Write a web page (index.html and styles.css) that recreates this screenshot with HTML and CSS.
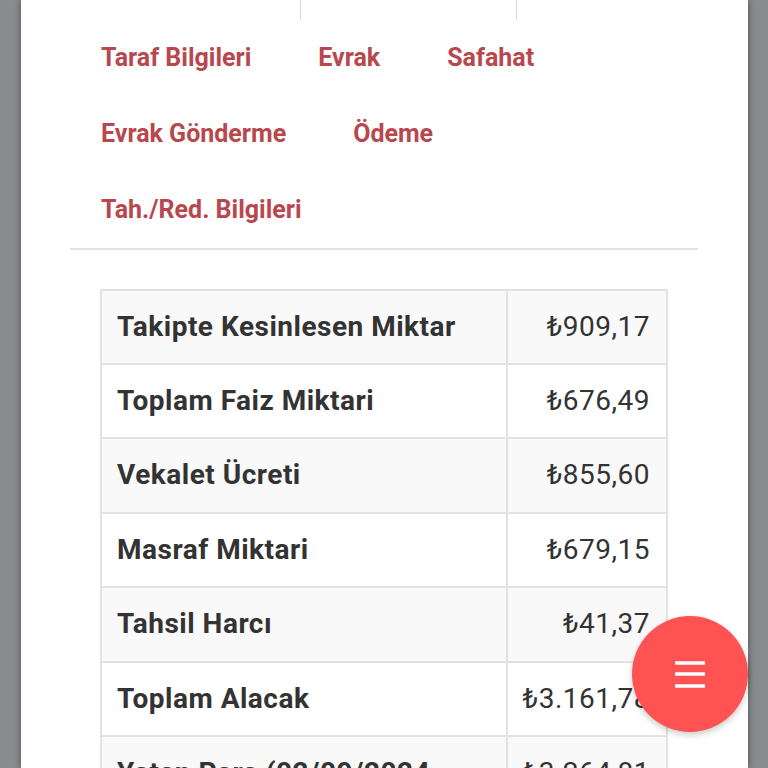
FILE: index.html
```html
<!DOCTYPE html>
<html lang="tr">
<head>
<meta charset="utf-8">
<link rel="stylesheet" href="styles.css">
</head>
<body>
<div class="page">
  <div class="card">
    <div class="topstrip">
      <span class="seg seg1"></span>
      <span class="seg seg2"></span>
    </div>
    <ul class="tabs">
      <li><a>Taraf Bilgileri</a></li>
      <li><a>Evrak</a></li>
      <li><a>Safahat</a></li>
      <li><a>Evrak Gönderme</a></li>
      <li><a>Ödeme</a></li>
      <li><a>Tah./Red. Bilgileri</a></li>
    </ul>
    <div class="divider"></div>
    <table class="sum">
      <tr><th>Takipte Kesinlesen Miktar</th><td>₺909,17</td></tr>
      <tr><th>Toplam Faiz Miktari</th><td>₺676,49</td></tr>
      <tr><th>Vekalet Ücreti</th><td>₺855,60</td></tr>
      <tr><th>Masraf Miktari</th><td>₺679,15</td></tr>
      <tr><th>Tahsil Harcı</th><td>₺41,37</td></tr>
      <tr><th>Toplam Alacak</th><td>₺3.161,78</td></tr>
      <tr><th>Yatan Para (02/09/2024 Tarihine Kadar)</th><td>₺3.264,81</td></tr>
    </table>
  </div>
</div>
<button class="fab" aria-label="Menü">
  <svg width="34" height="28" viewBox="0 0 34 28"><path d="M2 3h30M2 14h30M2 26h30" stroke="#fff" stroke-width="3.4" fill="none"/></svg>
</button>
</body>
</html>
```
FILE: styles.css
```css
html, body { margin: 0; padding: 0; height: 100%; }
body {
  background: #8a8b8f;
  font-family: Roboto, "Noto Sans", sans-serif;
  overflow: hidden;
}
.page {
  height: 768px;
  padding: 0 20px 0 21px;
  display: flex;
}
.card {
  flex: 1;
  background: #fff;
  box-shadow: 0 0 7px rgba(0,0,0,0.45);
  overflow: hidden;
}
.topstrip {
  height: 19.5px;
  display: flex;
}
.seg { display: block; height: 20px; border-left: 1px solid #ddd; }
.seg1 { margin-left: 279px; width: 215px; }
.seg2 { width: 0; }
.tabs {
  list-style: none;
  margin: 0 0 0 49px;
  padding: 0;
  width: 628px;
  display: flex;
  flex-wrap: wrap;
}
.tabs li a {
  display: block;
  padding: 20px 36px 20px 31px;
  font-size: 25px;
  line-height: 36px;
  font-weight: 700;
  color: #b8474e;
}
.divider {
  margin-left: 49px;
  width: 628px;
  height: 2px;
  background: #e4e4e4;
}
.sum {
  margin: 39px 0 0 79px;
  width: 568px;
  border-collapse: collapse;
  color: #333;
  font-size: 28px;
  line-height: 40.4px;
  letter-spacing: 0.5px;
}
.sum th, .sum td {
  border: 2px solid #e2e2e2;
  padding: 16px 16px 16px 15px;
  vertical-align: top;
}
.sum th { text-align: left; font-weight: 700; width: 380px; }
.sum td { text-align: right; font-weight: 400; white-space: nowrap; }
.sum tr:nth-child(odd) { background: #f9f9f9; }
.fab {
  position: absolute;
  left: 632px;
  top: 616px;
  width: 116px;
  height: 116px;
  border-radius: 50%;
  border: 0;
  padding: 0;
  background: #ff5252;
  box-shadow: 0 3px 6px rgba(0,0,0,0.2);
  display: flex;
  align-items: center;
  justify-content: center;
}
```
